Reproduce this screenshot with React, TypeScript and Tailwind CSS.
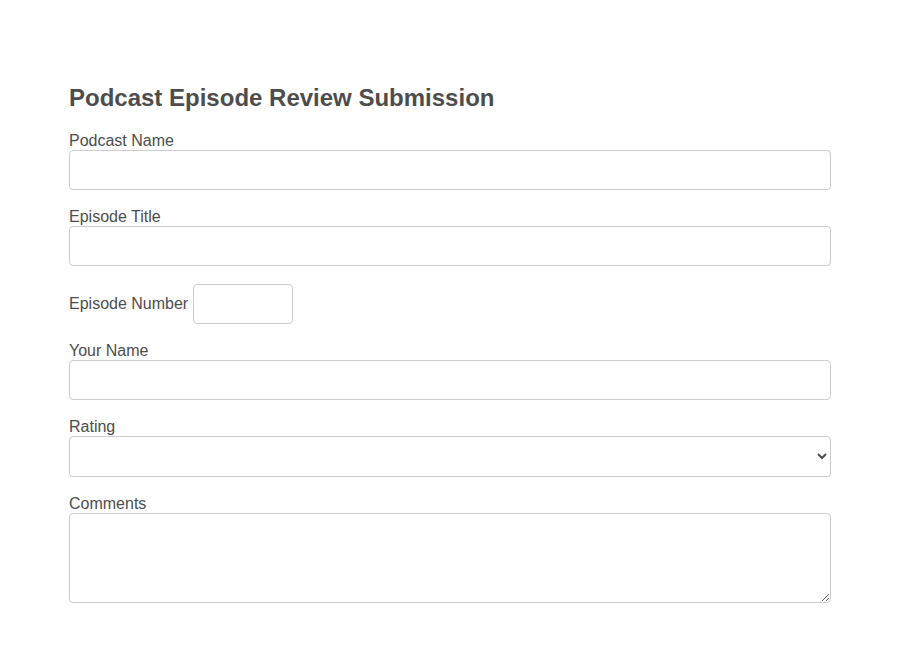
import React from 'react'

const inputCls =
  'block w-full h-[40px] rounded-[4px] border border-[#cccccc] bg-white px-[10px] text-[16px] text-[#4d4d4d] outline-none'

export default function App() {
  return (
    <div
      className="min-h-[671px] bg-white text-[#4d4d4d]"
      style={{ fontFamily: '"Liberation Sans", Arial, sans-serif' }}
    >
      <form className="mx-[69px] pt-[84px]">
        <h2 className="text-[24px] font-bold leading-[27.6px] mb-[20px]">Podcast Episode Review Submission</h2>

        <div className="mb-[17.6px]">
          <label className="block text-[16px] leading-[18.4px]">Podcast Name</label>
          <input type="text" className={inputCls} />
        </div>

        <div className="mb-[18px]">
          <label className="block text-[16px] leading-[18.4px]">Episode Title</label>
          <input type="text" className={inputCls} />
        </div>

        <div className="mb-[17.6px] flex items-center gap-[5px]">
          <label className="text-[16px] leading-[18.4px]">Episode Number</label>
          <input
            type="text"
            className="h-[40px] w-[100px] rounded-[4px] border border-[#cccccc] bg-white px-[10px] text-[16px] outline-none"
          />
        </div>

        <div className="mb-[17.6px]">
          <label className="block text-[16px] leading-[18.4px]">Your Name</label>
          <input type="text" className={inputCls} />
        </div>

        <div className="mb-[17.6px]">
          <label className="block text-[16px] leading-[18.4px]">Rating</label>
          <select className="block w-full h-[41px] rounded-[4px] border border-[#cccccc] bg-white px-[6px] text-[16px] outline-none">
            <option value=""></option>
            <option value="1">1</option>
            <option value="2">2</option>
            <option value="3">3</option>
            <option value="4">4</option>
            <option value="5">5</option>
          </select>
        </div>

        <div>
          <label className="block text-[16px] leading-[18.4px]">Comments</label>
          <textarea className="block w-full h-[90px] rounded-[4px] border border-[#cccccc] bg-white p-[10px] text-[16px] outline-none" />
        </div>
      </form>
    </div>
  )
}
